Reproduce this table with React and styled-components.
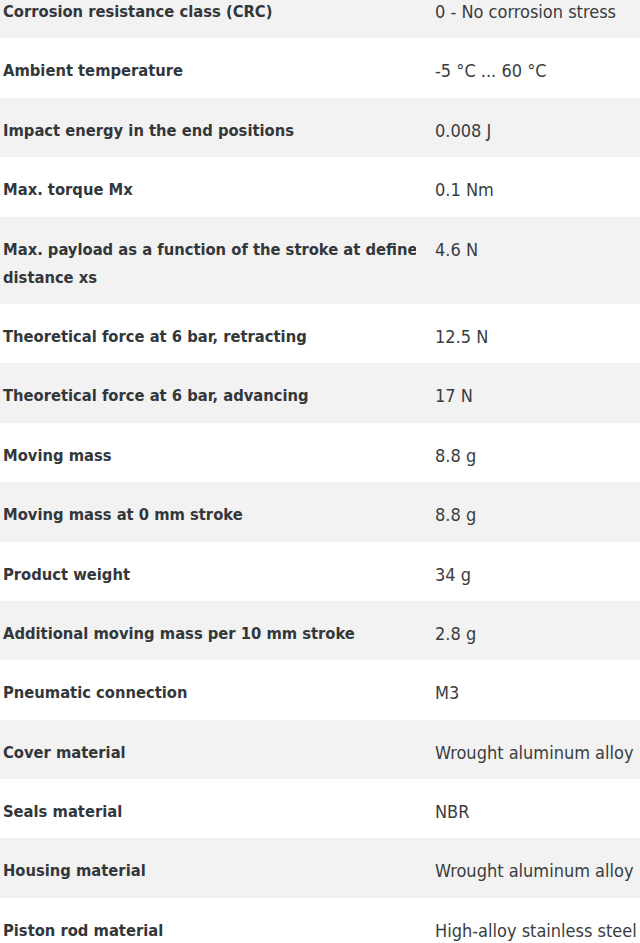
import React from 'react'
import styled, { createGlobalStyle } from 'styled-components'

const GlobalStyle = createGlobalStyle`
    html, body {
        margin: 0;
        padding: 0;
        background: #ffffff;
        overflow: hidden;
    }
    body {
        width: 640px;
        height: 943px;
        font-family: "DejaVu Sans Condensed", "Liberation Sans Narrow", "Open Sans", sans-serif;
    }
`

const Table = styled.div`
    width: 640px;
    margin-top: -21px;
    display: flex;
    flex-direction: column;
`

const Row = styled.div`
    display: grid;
    grid-template-columns: 416px 1fr;
    padding: 19px 0 12.4px 0;
    background-color: ${props => (props.$shaded ? '#f2f2f2' : '#ffffff')};
`

const Label = styled.div`
    padding-left: 3px;
    overflow: hidden;
    font-size: 16.4px;
    line-height: 28px;
    font-weight: 700;
    color: #32373b;
`

const LabelText = styled.span`
    display: block;
    width: 432px;
`

const Value = styled.div`
    padding-left: 19px;
    overflow: hidden;
    white-space: nowrap;
    font-size: 18px;
    line-height: 28px;
    font-weight: 400;
    color: #3a3d40;
`

const specs = [
    ['Corrosion resistance class (CRC)', '0 - No corrosion stress'],
    ['Ambient temperature', '-5 °C ... 60 °C'],
    ['Impact energy in the end positions', '0.008 J'],
    ['Max. torque Mx', '0.1 Nm'],
    ['Max. payload as a function of the stroke at defined distance xs', '4.6 N'],
    ['Theoretical force at 6 bar, retracting', '12.5 N'],
    ['Theoretical force at 6 bar, advancing', '17 N'],
    ['Moving mass', '8.8 g'],
    ['Moving mass at 0 mm stroke', '8.8 g'],
    ['Product weight', '34 g'],
    ['Additional moving mass per 10 mm stroke', '2.8 g'],
    ['Pneumatic connection', 'M3'],
    ['Cover material', 'Wrought aluminum alloy'],
    ['Seals material', 'NBR'],
    ['Housing material', 'Wrought aluminum alloy'],
    ['Piston rod material', 'High-alloy stainless steel'],
]

const App = () => {
    return (
        <>
            <GlobalStyle />
            <Table>
                {specs.map(([label, value], i) => (
                    <Row key={label} $shaded={i % 2 === 0}>
                        <Label>
                            <LabelText>{label}</LabelText>
                        </Label>
                        <Value>{value}</Value>
                    </Row>
                ))}
            </Table>
        </>
    )
}

export default App
